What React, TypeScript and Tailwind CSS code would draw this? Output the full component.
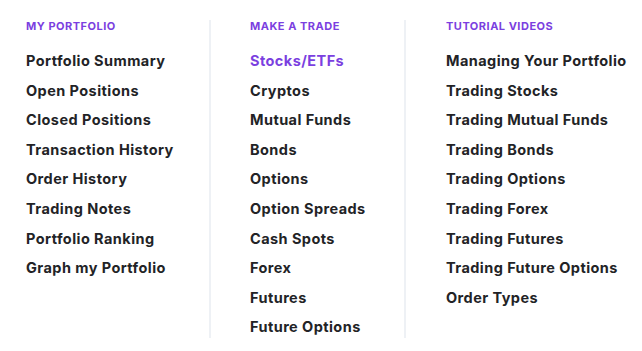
const portfolio = [
  "Portfolio Summary",
  "Open Positions",
  "Closed Positions",
  "Transaction History",
  "Order History",
  "Trading Notes",
  "Portfolio Ranking",
  "Graph my Portfolio",
];

const trade = [
  "Stocks/ETFs",
  "Cryptos",
  "Mutual Funds",
  "Bonds",
  "Options",
  "Option Spreads",
  "Cash Spots",
  "Forex",
  "Futures",
  "Future Options",
];

const tutorials = [
  "Managing Your Portfolio",
  "Trading Stocks",
  "Trading Mutual Funds",
  "Trading Bonds",
  "Trading Options",
  "Trading Forex",
  "Trading Futures",
  "Trading Future Options",
  "Order Types",
];

function Column({ title, items, active }: { title: string; items: string[]; active?: string }) {
  return (
    <div>
      <div className="pt-px text-[11px] font-bold uppercase leading-none tracking-[0.045em] text-[#7b3fe0]">{title}</div>
      <ul className="mt-[14px] flex flex-col">
        {items.map((item) => (
          <li
            key={item}
            className={
              "h-[29.6px] whitespace-nowrap text-[14.5px] font-bold leading-[29.6px] tracking-[0.03em] " +
              (item === active ? "text-[#7b3fe0]" : "text-[#222326]")
            }
          >
            {item}
          </li>
        ))}
      </ul>
    </div>
  );
}

export default function App() {
  return (
    <div className="h-[351px] w-[642px] overflow-hidden bg-white font-['Inter',sans-serif]">
      <div className="flex h-[338px] pt-[20px]">
        <div className="w-[209px] shrink-0 pl-[26px]">
          <Column title="My Portfolio" items={portfolio} />
        </div>
        <div className="w-[195px] shrink-0 border-l-2 border-[#eef1f5] pl-[39px]">
          <Column title="Make a Trade" items={trade} active="Stocks/ETFs" />
        </div>
        <div className="flex-1 border-l-2 border-[#eef1f5] pl-[40px]">
          <Column title="Tutorial Videos" items={tutorials} />
        </div>
      </div>
    </div>
  );
}
